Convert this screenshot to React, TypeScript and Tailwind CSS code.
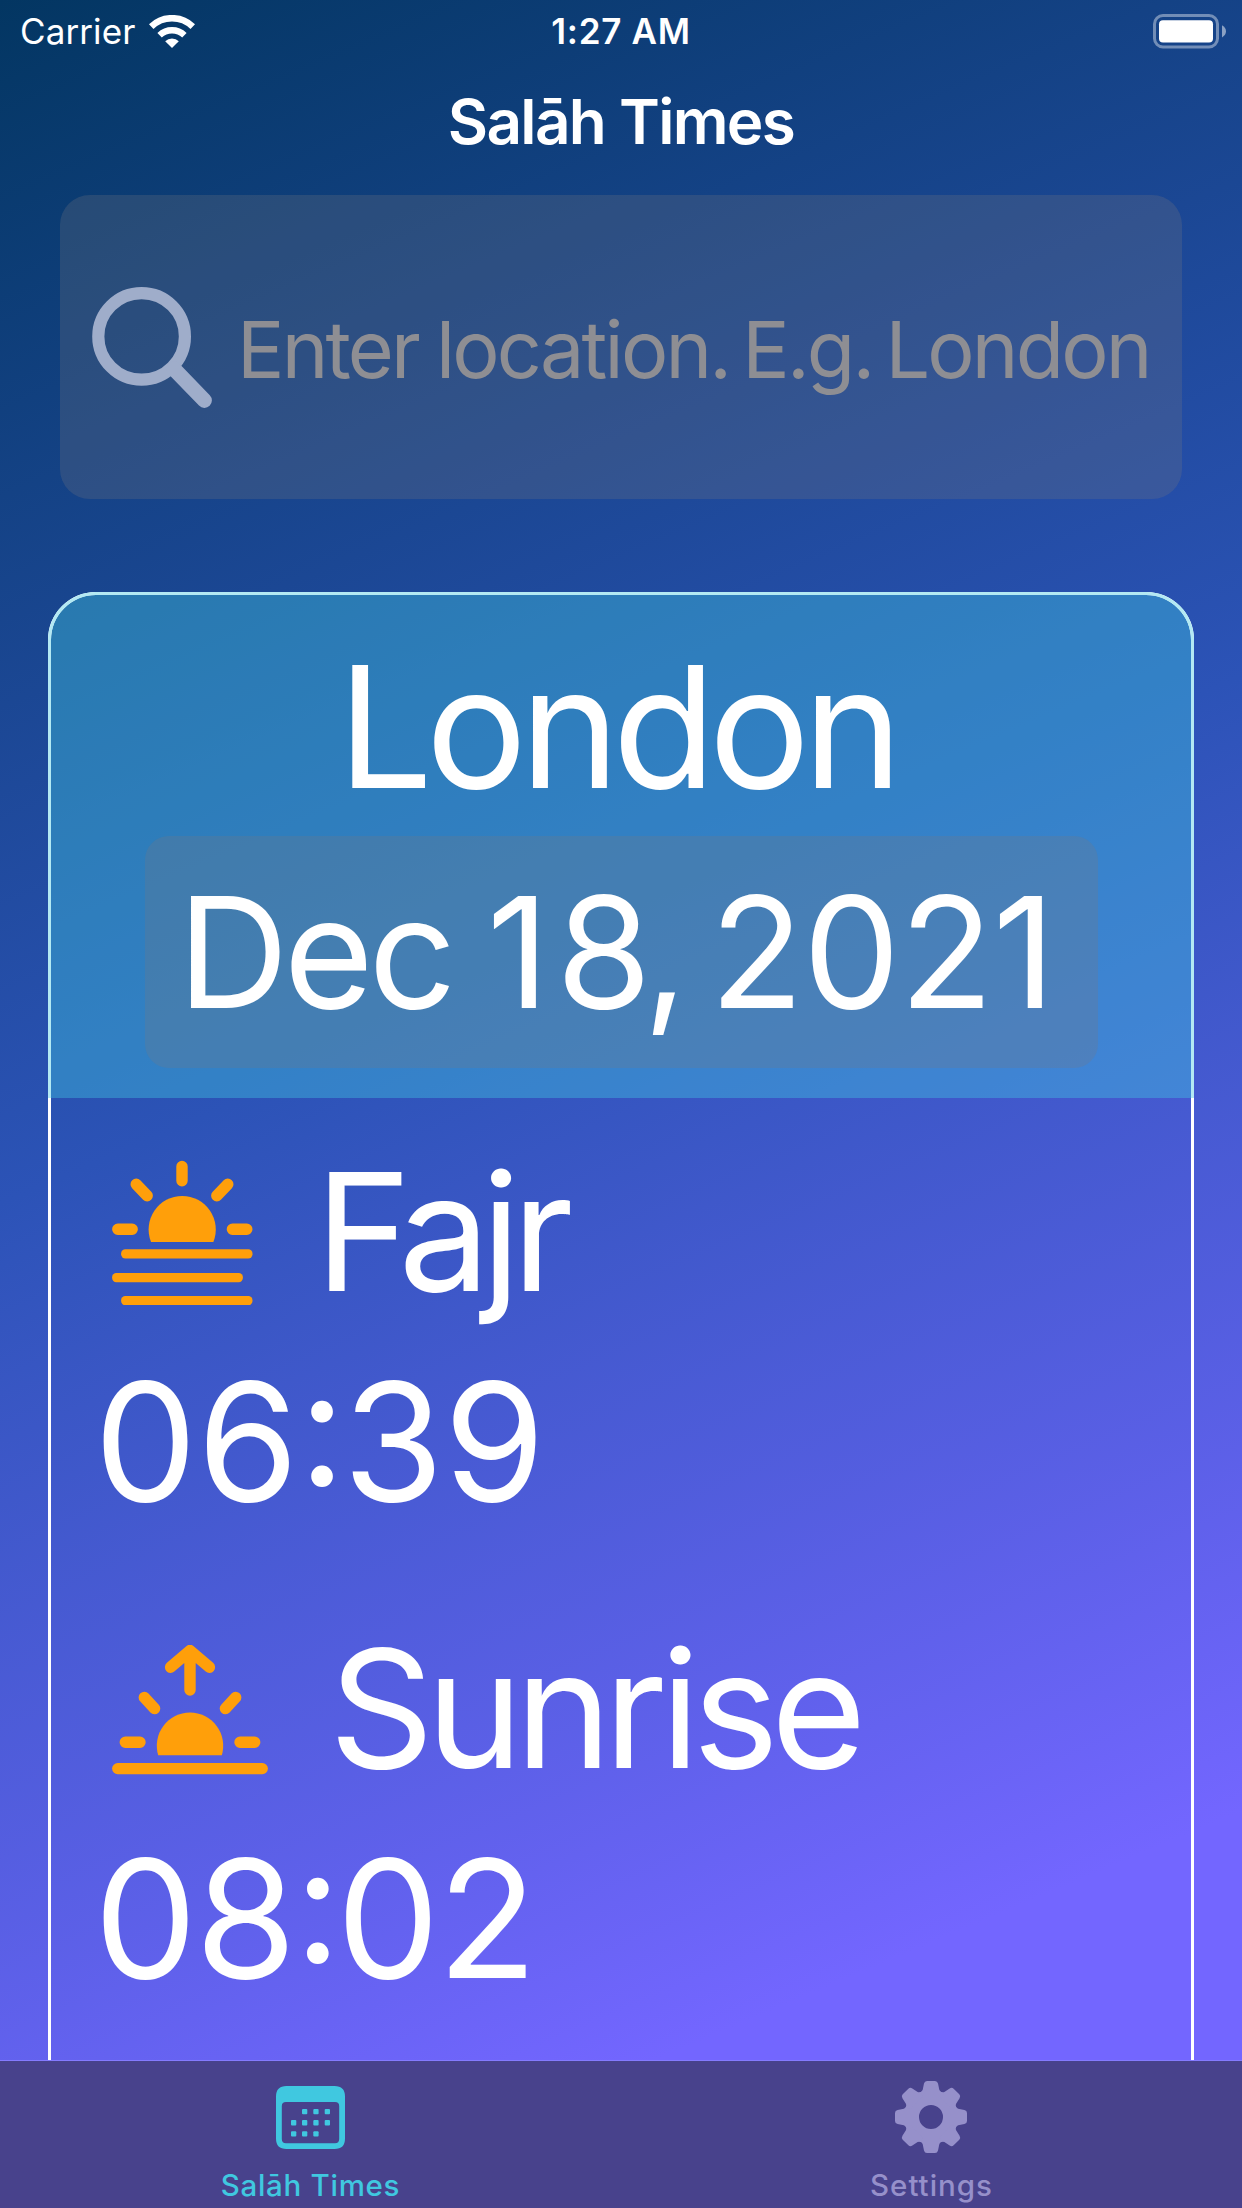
import type { ReactNode } from "react";

function WifiIcon() {
  return (
    <svg className="ml-[14px] h-[33px] w-[46px]" viewBox="0 0 46 33" fill="none">
      <path d="M2.2 12.2A30 30 0 0 1 43.8 12.2" stroke="white" strokeWidth="6.6" transform="translate(0 -.6)" />
      <path d="M10.6 20.6A18 18 0 0 1 35.4 20.6" stroke="white" strokeWidth="6.4" transform="translate(0 -.4)" />
      <path d="M23 33L16.2 26.2A9.6 9.6 0 0 1 29.8 26.2Z" fill="white" />
    </svg>
  );
}

function BatteryIcon() {
  return (
    <svg className="h-[35px] w-[74px]" viewBox="0 0 74 35">
      <rect x="1.5" y="1.5" width="63" height="31.5" rx="8.5" fill="none" stroke="white" strokeOpacity=".4" strokeWidth="3" />
      <rect x="6" y="6.2" width="54" height="22.2" rx="4" fill="white" />
      <path d="M69 11.2Q73 13.5 73 17.3T69 23.4Z" fill="white" fillOpacity=".5" />
    </svg>
  );
}

function SearchIcon() {
  return (
    <svg className="mt-[2px] h-[122px] w-[121px] shrink-0" viewBox="92 287 121 122" fill="none" stroke="#9fadca" strokeLinecap="round">
      <circle cx="141.6" cy="336.4" r="43.3" strokeWidth="12.2" />
      <path d="M174 369L204.4 400.4" strokeWidth="15" />
    </svg>
  );
}

function DawnIcon() {
  return (
    <svg className="mt-[2px] h-[145px] w-[141px] shrink-0" viewBox="112 1160 141 145" fill="#ff9f0a">
      <path
        d="M182 1166.5V1180.8M136.2 1184.3L147.2 1195.7M227.8 1184.3L216.8 1195.7M117.8 1229.2H132.2M232.4 1229.2H246.8"
        stroke="#ff9f0a"
        strokeWidth="11.4"
        strokeLinecap="round"
      />
      <path d="M151 1242A33.6 33.6 0 1 1 213.4 1242Z" />
      <rect x="121.1" y="1249.3" width="131.4" height="9.2" rx="4.2" />
      <rect x="112.1" y="1273" width="130.8" height="9.2" rx="4.2" />
      <rect x="121.1" y="1296" width="131.4" height="9.2" rx="4.2" />
    </svg>
  );
}

function SunriseIcon() {
  return (
    <svg className="mt-[2px] h-[130px] w-[156px] shrink-0" viewBox="112 1645 156 130" fill="#ff9f0a">
      <g fill="none" stroke="#ff9f0a" strokeWidth="11.4" strokeLinecap="round" strokeLinejoin="round">
        <path d="M190 1652V1690M170.6 1667.2L190 1650.6L209.4 1667.2" />
        <path d="M144.3 1697.4L154.6 1708.6M235.7 1697.4L225.4 1708.6M125.3 1742.3H140M240 1742.3H254.7" />
      </g>
      <path d="M158.2 1755.3A33.2 33.2 0 1 1 221.8 1755.3Z" />
      <rect x="112.1" y="1763" width="155.8" height="11.2" rx="5.6" />
    </svg>
  );
}

function CalendarIcon() {
  const dots = [
    [26, 23], [37.3, 23], [48.7, 23],
    [15, 34.1], [26, 34.1], [37.3, 34.1], [48.7, 34.1],
    [15, 45.2], [26, 45.2], [37.3, 45.2],
  ];
  return (
    <svg className="h-[63px] w-[69px]" viewBox="0 0 69 63" fill="#40c8e0">
      <path
        fillRule="evenodd"
        d="M10.5 0H58.5Q69 0 69 10.5V52.5Q69 63 58.5 63H10.5Q0 63 0 52.5V10.5Q0 0 10.5 0ZM10 16Q5.8 16 5.8 20.2V53Q5.8 57.2 10 57.2H59Q63.2 57.2 63.2 53V20.2Q63.2 16 59 16Z"
      />
      {dots.map(([x, y]) => (
        <rect key={`${x}-${y}`} x={x} y={y} width="5.3" height="5.3" rx="1" />
      ))}
    </svg>
  );
}

function GearIcon() {
  return (
    <svg className="mr-[2px] h-[72px] w-[72px]" viewBox="-36 -36 72 72" fill="#9690ca">
      <circle r="19.5" fill="none" stroke="#9690ca" strokeWidth="15" />
      {[0, 45, 90, 135, 180, 225, 270, 315].map((a) => (
        <path
          key={a}
          transform={`rotate(${a})`}
          d="M-4 -36H4Q6.4 -36 7 -33.4L8.3 -27.2Q8.8 -25.4 11 -24.6L8 -20H-8L-11 -24.6Q-8.8 -25.4 -8.3 -27.2L-7 -33.4Q-6.4 -36 -4 -36Z"
        />
      ))}
    </svg>
  );
}

function Prayer({ icon, name, time, nameClass, timeClass }: {
  icon: ReactNode;
  name: string;
  time: string;
  nameClass: string;
  timeClass: string;
}) {
  const [hours, minutes] = time.split(":");
  return (
    <section className="text-[163.5px] leading-[210px]">
      <div className="flex h-[210px] items-center pl-[61px]">
        {icon}
        <span className={nameClass}>{name}</span>
      </div>
      <div className={`h-[210px] ${timeClass}`}>
        {hours}
        <span className="-mr-[3px] inline-block -translate-y-[15px]">:</span>
        {minutes}
      </div>
    </section>
  );
}

export default function App() {
  return (
    <div className="flex h-[2208px] w-[1242px] flex-col overflow-hidden whitespace-nowrap bg-[linear-gradient(157deg,#033662_0%,#2c53b7_44%,#7366ff_85.5%)] font-['Inter',sans-serif] text-white">
      <header className="h-[195px] shrink-0">
        <div className="grid h-[62px] grid-cols-3 items-center">
          <div className="flex items-center pl-[20px] text-[35px]">
            <span className="tracking-[0.1px]">Carrier</span>
            <WifiIcon />
          </div>
          <div className="text-center text-[35px] font-semibold tracking-[0.7px]">1:27 AM</div>
          <div className="flex justify-end pr-[15px]">
            <BatteryIcon />
          </div>
        </div>
        <h1 className="text-center text-[62px] font-semibold leading-[120px] tracking-[-1.7px]">Salāh Times</h1>
      </header>

      <main className="flex min-h-0 flex-1 flex-col overflow-hidden">
        <div className="mx-[60px] flex h-[304px] shrink-0 items-center rounded-[30px] bg-[#767680]/26 pl-[32px]">
          <SearchIcon />
          <span className="ml-[24px] mt-[4px] text-[79px] leading-[100px] tracking-[-2.8px] [word-spacing:-6.5px] text-[#8e8e93]">
            <span className="mr-[5px]">Enter</span> location. E.g. London
          </span>
        </div>

        <article className="relative mx-[48px] mt-[93px] h-[1700px] shrink-0 pt-[3px]">
          <div className="-mt-[3px] flex h-[506px] flex-col items-center rounded-t-[48px] bg-[#40c8e0]/40 pt-[35px]">
            <h2 className="pr-[9px] text-[169px] leading-[200px] tracking-[-7.2px]">London</h2>
            <div className="mt-[9px] h-[232px] w-[953px] rounded-[24px] bg-[#767680]/26 pl-[33px] text-[154px] leading-[232px] tracking-[-5px]">
              Dec <span className="-ml-[3px] tracking-[7px]">1</span>8, <span className="-ml-[11px] tracking-[-0.7px]">2021</span>
            </div>
          </div>
          <div className="flex flex-col gap-[57.5px] pl-[3px] pt-[28.5px]">
            <Prayer icon={<DawnIcon />} name="Fajr" time="06:39" nameClass="ml-[62px] tracking-[-9px]" timeClass="pl-[43px] tracking-[0px]" />
            <Prayer icon={<SunriseIcon />} name="Sunrise" time="08:02" nameClass="ml-[61px] tracking-[-7.7px]" timeClass="pl-[43px] tracking-[-2px]" />
          </div>
          <div className="pointer-events-none absolute inset-0 rounded-[48px] border-[3px] border-white" />
          <div className="pointer-events-none absolute inset-x-0 top-0 h-[506px] rounded-t-[48px] border-x-[3px] border-t-[3px] border-[#b3e9f3]" />
        </article>
      </main>

      <nav className="grid h-[148px] shrink-0 grid-cols-2 border-t border-[#857bff] bg-[#48428c] text-[29.5px] font-medium leading-[36px]">
        <div className="flex flex-col items-center pt-[25px] text-[#40c8e0]">
          <CalendarIcon />
          <span className="mt-[18px] tracking-[0.7px]">Salāh Times</span>
        </div>
        <div className="flex flex-col items-center pt-[20px] text-[#9690ca]">
          <GearIcon />
          <span className="mt-[14px] tracking-[1px]">Settings</span>
        </div>
      </nav>
    </div>
  );
}
